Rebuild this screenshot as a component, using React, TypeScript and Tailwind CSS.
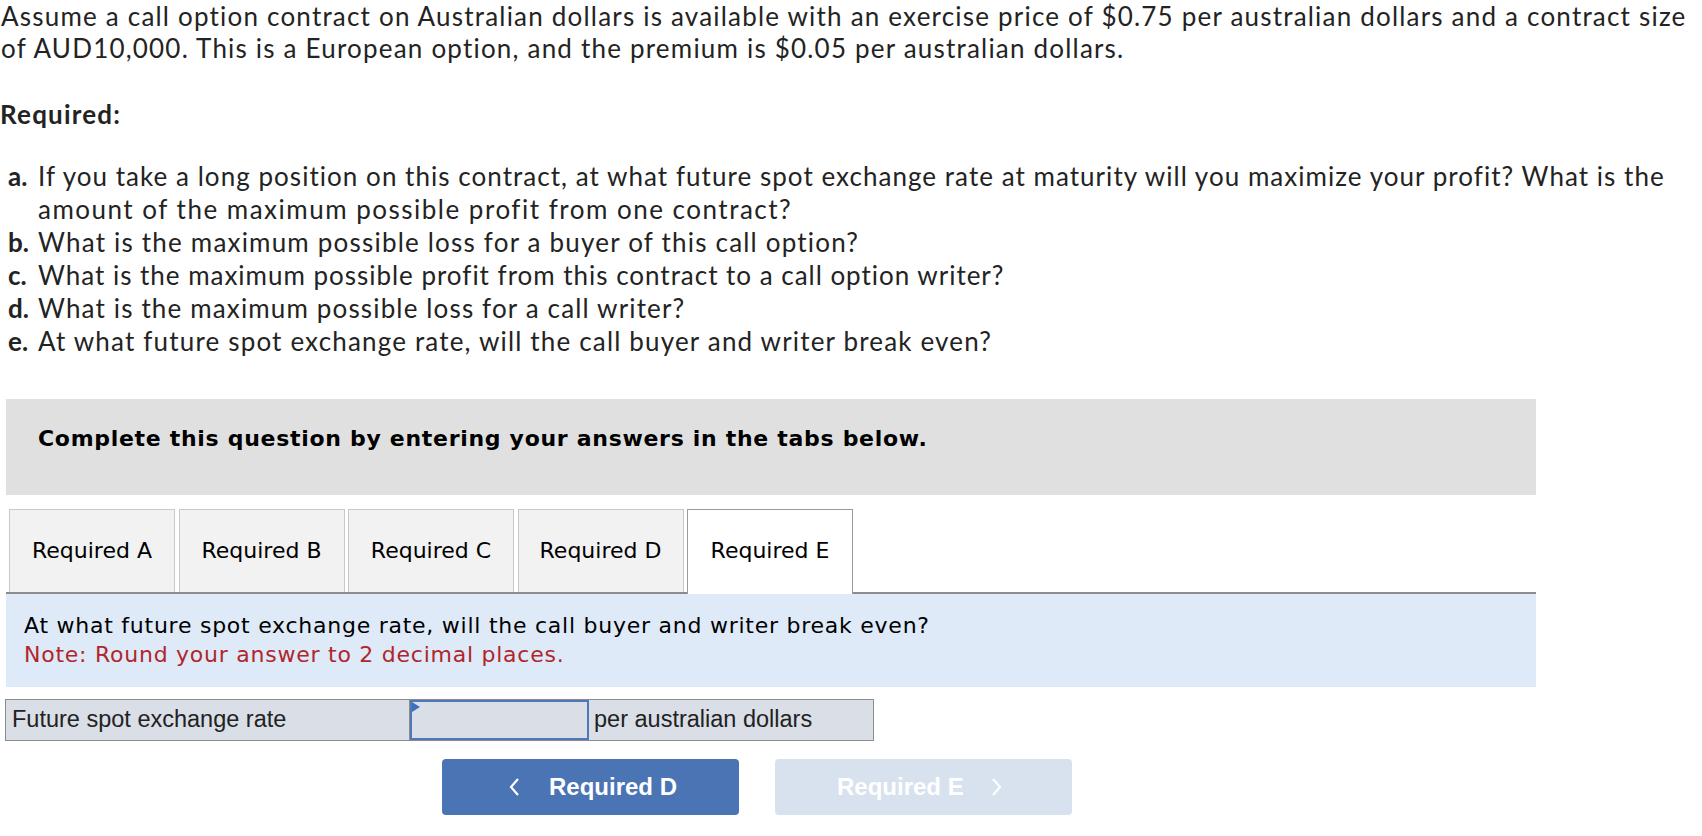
import React from "react";

const Chevron = ({ dir }: { dir: "left" | "right" }) => (
  <svg width="12" height="20" viewBox="0 0 12 20" className="shrink-0">
    <path
      d={dir === "left" ? "M10 2 L3 10 L10 18" : "M2 2 L9 10 L2 18"}
      fill="none"
      stroke="white"
      strokeWidth="2.2"
    />
  </svg>
);

export default function App() {
  const tabs = ["Required A", "Required B", "Required C", "Required D", "Required E"];
  const items: [string, [string, string][]][] = [
    [
      "a.",
      [
        [
          "If you take a long position on this contract, at what future spot exchange rate at maturity will you maximize your profit? What is the",
          "tracking-[1.04px]",
        ],
        ["amount of the maximum possible profit from one contract?", "tracking-[1.5px]"],
      ],
    ],
    ["b.", [["What is the maximum possible loss for a buyer of this call option?", "tracking-[1.2px]"]]],
    ["c.", [["What is the maximum possible profit from this contract to a call option writer?", "tracking-[0.98px]"]]],
    ["d.", [["What is the maximum possible loss for a call writer?", "tracking-[1.15px]"]]],
    ["e.", [["At what future spot exchange rate, will the call buyer and writer break even?", "tracking-[1.17px]"]]],
  ];
  return (
    <div className="w-[1702px] h-[836px] bg-white overflow-hidden">
      <div className="font-['Lato','Open_Sans',sans-serif] text-[26px] tracking-[1.2px] text-[#232323]">
        <div className="pl-[1px] leading-[31.5px] pt-[1px] whitespace-nowrap">
          <div>
            Assume a call option contract on Australian dollars is available with an exercise price of $0.75 per australian dollars and a contract size
          </div>
          <div>of AUD10,000. This is a European option, and the premium is $0.05 per australian dollars.</div>
        </div>
        <p className="mt-[35px] font-bold leading-[31.5px]">Required:</p>
        <ol className="mt-[29px] leading-[33px]">
          {items.map(([k, lines]) => (
            <li key={k} className="flex whitespace-nowrap">
              <span className="w-[38px] shrink-0 pl-[8px] font-bold tracking-normal">{k}</span>
              <span className="flex flex-col">
                {lines.map(([l, tr]) => (
                  <span key={l} className={tr}>
                    {l}
                  </span>
                ))}
              </span>
            </li>
          ))}
        </ol>
      </div>

      <div className="mt-[41px] ml-[6px] w-[1530px] h-[96px] bg-[#e0e0e0] pt-[26px] pl-[32px] font-['DejaVu_Sans',sans-serif] font-bold text-[22px] leading-[28px] tracking-[0.7px] text-black">
        Complete this question by entering your answers in the tabs below.
      </div>

      <div className="ml-[6px] w-[1530px] mt-[14px] flex gap-[3.5px] pl-[3px] border-b-2 border-[#8c8c8c] font-['DejaVu_Sans',sans-serif] text-[22px] text-black">
        {tabs.map((t, i) => {
          const active = i === 4;
          return (
            <div
              key={t}
              className={
                active
                  ? "relative z-10 -mb-[2px] w-[166px] h-[85px] pb-[2px] bg-white border border-b-0 border-[#9a9a9a] flex items-center justify-center"
                  : "w-[166px] h-[83px] bg-[#f2f2f2] border border-b-0 border-[#c8c8c8] flex items-center justify-center"
              }
            >
              {t}
            </div>
          );
        })}
      </div>

      <div className="ml-[6px] w-[1530px] h-[93px] bg-[#deeaf7] flex flex-col justify-center pl-[18px] font-['DejaVu_Sans',sans-serif] text-[22px] tracking-[0.75px] leading-[29.5px]">
        <div className="text-black">At what future spot exchange rate, will the call buyer and writer break even?</div>
        <div className="text-[#b0262b]">Note: Round your answer to 2 decimal places.</div>
      </div>

      <div className="mt-[12px] ml-[5px] w-[869px] h-[42px] flex border border-[#8c8c8c] bg-[#d9dee7] font-['Liberation_Sans',Arial,sans-serif] text-[23.5px] text-[#222]">
        <div className="w-[404px] flex items-center pl-[6px] border-r border-[#8c8c8c]">Future spot exchange rate</div>
        <div className="relative w-[179px] border-2 border-[#4f78b6]">
          <div className="absolute left-0 top-0 w-0 h-0 border-t-[5px] border-b-[5px] border-l-[8px] border-t-transparent border-b-transparent border-l-[#3f6fbf]" />
        </div>
        <div className="flex-1 flex items-center pl-[5px]">per australian dollars</div>
      </div>

      <div className="mt-[18px] ml-[442px] flex gap-[36px] font-['Liberation_Sans',Arial,sans-serif] font-bold text-[24px] text-white">
        <div className="w-[297px] h-[56px] rounded-[4px] bg-[#4a74b3] flex items-center pl-[66px] gap-[29px]">
          <Chevron dir="left" />
          <span>Required D</span>
        </div>
        <div className="w-[297px] h-[56px] rounded-[4px] bg-[#d8e2ee] flex items-center pl-[62px] gap-[27px]">
          <span>Required E</span>
          <Chevron dir="right" />
        </div>
      </div>
    </div>
  );
}
